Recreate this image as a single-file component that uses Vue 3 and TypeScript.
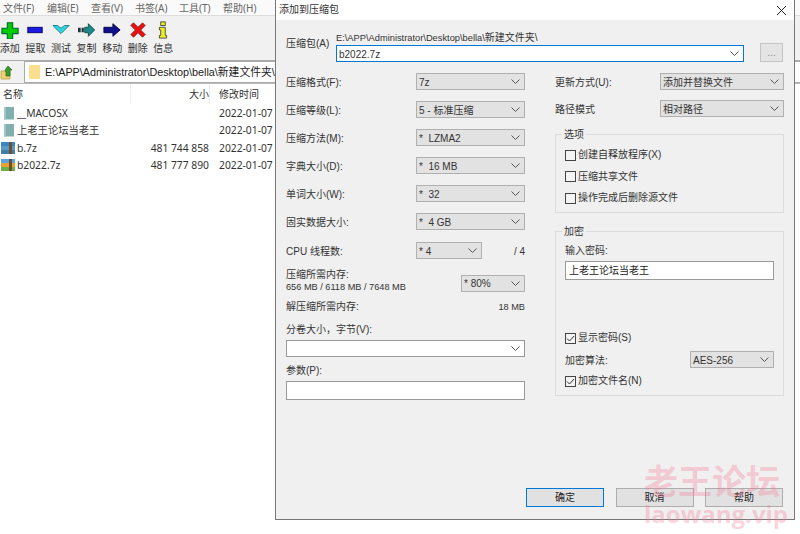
<script setup lang="ts">
type Tool = { label: string; icon: string }
type FileRow = { name: string; size: string; date: string; kind: string }
type Combo = { label: string; value: string }

const menus: string[] = ['文件(F)', '编辑(E)', '查看(V)', '书签(A)', '工具(T)', '帮助(H)']

const tools: Tool[] = [
  { label: '添加', icon: 'add' },
  { label: '提取', icon: 'extract' },
  { label: '测试', icon: 'test' },
  { label: '复制', icon: 'copy' },
  { label: '移动', icon: 'move' },
  { label: '删除', icon: 'del' },
  { label: '信息', icon: 'info' }
]

const files: FileRow[] = [
  { name: '__MACOSX', size: '', date: '2022-01-07', kind: 'folder' },
  { name: '上老王论坛当老王', size: '', date: '2022-01-07', kind: 'folder' },
  { name: 'b.7z', size: '481 744 858', date: '2022-01-07', kind: 'arc' },
  { name: 'b2022.7z', size: '481 777 890', date: '2022-01-07', kind: 'arc2' }
]

const leftCombos: Combo[] = [
  { label: '压缩格式(F):', value: '7z' },
  { label: '压缩等级(L):', value: '5 - 标准压缩' },
  { label: '压缩方法(M):', value: '*  LZMA2' },
  { label: '字典大小(D):', value: '*  16 MB' },
  { label: '单词大小(W):', value: '*  32' },
  { label: '固实数据大小:', value: '*  4 GB' }
]

const options: string[] = ['创建自释放程序(X)', '压缩共享文件', '操作完成后删除源文件']
const pathLatin = 'E:\\APP\\Administrator\\Desktop\\bella\\'
const pathCjk = '新建文件夹\\'
</script>

<template>
  <div class="screen">
    <div class="main">
      <div class="menubar">
        <span v-for="m in menus" :key="m" class="menu">{{ m }}</span>
      </div>
      <div class="toolbar">
        <div v-for="t in tools" :key="t.label" class="tool">
          <svg class="tool-icon" width="20" height="18" viewBox="0 0 22 20">
            <path v-if="t.icon === 'add'" d="M8 2h6v6h6v6h-6v6H8v-6H2V8h6z" fill="#0c0" stroke="#063" stroke-width="1.2" />
            <rect v-if="t.icon === 'extract'" x="3" y="7" width="16" height="6" fill="#1a1ae0" stroke="#00006a" />
            <path v-if="t.icon === 'test'" d="M2 5l5 0 4 3 4-3 5 0-9 9z" fill="#2fd6e0" stroke="#127c86" />
            <template v-if="t.icon === 'copy'">
              <rect x="1" y="7.5" width="3" height="5" fill="#234" />
              <rect x="5" y="7.5" width="2.5" height="5" fill="#234" />
              <path d="M8.5 7h4V3l7 7-7 7v-4h-4z" fill="#1a8a8a" stroke="#0b4a4a" />
            </template>
            <path v-if="t.icon === 'move'" d="M2 7h10V3l8 7-8 7v-4H2z" fill="#10108c" stroke="#000050" />
            <path v-if="t.icon === 'del'" d="M3 5l3-3 5 5 5-5 3 3-5 5 5 5-3 3-5-5-5 5-3-3 5-5z" fill="#e81010" stroke="#801010" stroke-width=".8" />
            <template v-if="t.icon === 'info'">
              <rect x="8.5" y="1" width="5" height="4" fill="#eef020" stroke="#333" stroke-width=".9" />
              <path d="M7 7h6.500v9H15v3H7v-3h1.500V10H7z" fill="#eef020" stroke="#333" stroke-width=".9" />
            </template>
          </svg>
          <span>{{ t.label }}</span>
        </div>
      </div>
      <div class="addressbar">
        <svg class="up-icon" width="15" height="15" viewBox="0 0 15 15">
          <path d="M1 6h9v8H1z" fill="#f0d070" stroke="#b89a40" stroke-width=".7" />
          <path d="M8 1l4 4h-2v6H6V7L5 5z" fill="#3a9a30" stroke="#1f6a20" stroke-width=".7" />
        </svg>
        <div class="address">
          <svg width="11" height="14" viewBox="0 0 11 14"><rect width="11" height="14" rx="1" fill="#fbdf8f" /></svg>
          <span class="address-text">{{ pathLatin }}{{ pathCjk }}</span>
        </div>
      </div>
      <div class="list-head">
        <span class="col-name">名称</span>
        <span class="col-size">大小</span>
        <span class="col-date">修改时间</span>
      </div>
      <div class="list">
        <div v-for="f in files" :key="f.name" class="file">
          <span class="col-name file-name">
            <svg v-if="f.kind === 'folder'" width="14" height="14" viewBox="0 0 14 14">
              <rect x="3" y="1" width="10" height="12.500" fill="#80afb0" />
              <rect x="3" y="1" width="2" height="12.500" fill="#a0c6c6" />
            </svg>
            <svg v-else width="14" height="14" viewBox="0 0 14 14">
              <rect y="1" width="14" height="4" :fill="f.kind === 'arc' ? '#3b86c4' : '#5aa5dc'" />
              <rect y="5" width="14" height="4" :fill="f.kind === 'arc' ? '#5a9ac8' : '#e8a030'" />
              <rect y="9" width="14" height="4" :fill="f.kind === 'arc' ? '#3f7fa8' : '#68b048'" />
              <rect x="8" y="1" width="3" height="12" fill="#705030" />
            </svg>
            <span>{{ f.name }}</span>
          </span>
          <span class="col-size">{{ f.size }}</span>
          <span class="col-date">{{ f.date }}</span>
        </div>
      </div>
    </div>

    <div class="dialog">
      <div class="titlebar">
        <span>添加到压缩包</span>
        <svg width="11" height="11" viewBox="0 0 11 11"><path d="M1 1l9 9M10 1l-9 9" stroke="#222" fill="none" /></svg>
      </div>
      <div class="dialog-body">
        <div class="archive">
          <span class="archive-label">压缩包(A)</span>
          <div class="archive-main">
            <span class="archive-path"><span class="path-latin">{{ pathLatin }}</span>{{ pathCjk }}</span>
            <div class="combo combo-focus">
              <span>b2022.7z</span>
              <svg class="chev" width="9" height="5" viewBox="0 0 9 5"><path d="M.5.500l4 4 4-4" /></svg>
            </div>
          </div>
          <div class="browse">...</div>
        </div>

        <div class="columns">
          <div class="left">
            <div v-for="c in leftCombos" :key="c.label" class="row">
              <span>{{ c.label }}</span>
              <div class="combo combo-left">
                <span>{{ c.value }}</span>
                <svg class="chev" width="9" height="5" viewBox="0 0 9 5"><path d="M.5.500l4 4 4-4" /></svg>
              </div>
            </div>
            <div class="row row-cpu">
              <span class="cpu-label">CPU 线程数:</span>
              <div class="combo combo-cpu">
                <span>*  4</span>
                <svg class="chev" width="9" height="5" viewBox="0 0 9 5"><path d="M.5.500l4 4 4-4" /></svg>
              </div>
              <span class="cpu-total">/ 4</span>
            </div>
            <div class="memory">
              <div class="memory-text">
                <span>压缩所需内存:</span>
                <span class="small-num">656 MB / 6118 MB / 7648 MB</span>
              </div>
              <div class="combo combo-mem">
                <span>* 80%</span>
                <svg class="chev" width="9" height="5" viewBox="0 0 9 5"><path d="M.5.500l4 4 4-4" /></svg>
              </div>
            </div>
            <div class="decomp">
              <span>解压缩所需内存:</span>
              <span class="small-num">18 MB</span>
            </div>
            <div class="field-label split-label">分卷大小，字节(V):</div>
            <div class="combo combo-white">
              <span></span>
              <svg class="chev" width="9" height="5" viewBox="0 0 9 5"><path d="M.5.500l4 4 4-4" /></svg>
            </div>
            <div class="field-label param-label">参数(P):</div>
            <div class="text-input param-input"></div>
          </div>

          <div class="right">
            <div class="row">
              <span>更新方式(U):</span>
              <div class="combo combo-right">
                <span>添加并替换文件</span>
                <svg class="chev" width="9" height="5" viewBox="0 0 9 5"><path d="M.5.500l4 4 4-4" /></svg>
              </div>
            </div>
            <div class="row row-path">
              <span>路径模式</span>
              <div class="combo combo-right">
                <span>相对路径</span>
                <svg class="chev" width="9" height="5" viewBox="0 0 9 5"><path d="M.5.500l4 4 4-4" /></svg>
              </div>
            </div>

            <div class="group group-options">
              <span class="legend">选项</span>
              <label v-for="o in options" :key="o" class="check">
                <span class="box"></span>
                <span>{{ o }}</span>
              </label>
            </div>

            <div class="group group-crypt">
              <span class="legend">加密</span>
              <div class="pw-label">输入密码:</div>
              <div class="text-input pw-input">上老王论坛当老王</div>
              <div class="crypt-bottom">
                <label class="check">
                  <span class="box">
                    <svg width="11" height="11" viewBox="0 0 11 11"><path d="M2 5.500l2.500 2.500L9 3" fill="none" stroke="#333" /></svg>
                  </span>
                  <span>显示密码(S)</span>
                </label>
                <div class="row row-algo">
                  <span>加密算法:</span>
                  <div class="combo combo-algo">
                    <span>AES-256</span>
                    <svg class="chev" width="9" height="5" viewBox="0 0 9 5"><path d="M.5.500l4 4 4-4" /></svg>
                  </div>
                </div>
                <label class="check">
                  <span class="box">
                    <svg width="11" height="11" viewBox="0 0 11 11"><path d="M2 5.500l2.500 2.500L9 3" fill="none" stroke="#333" /></svg>
                  </span>
                  <span>加密文件名(N)</span>
                </label>
              </div>
            </div>
          </div>
        </div>

        <div class="actions">
          <button class="btn btn-default">确定</button>
          <button class="btn">取消</button>
          <button class="btn">帮助</button>
        </div>
      </div>
    </div>

    <div class="watermark">
      <span class="wm-cn">老王论坛</span>
      <span class="wm-en">laowang.vip</span>
    </div>
  </div>
</template>

<style>
  html, body {
    margin: 0;
    background: #fff;
  }
</style>

<style scoped>
  .screen {
    position: relative;
    width: 800px;
    height: 534px;
    overflow: hidden;
    background: #fff;
    color: #333;
    font-family: "Noto Sans", "Noto Sans CJK SC", sans-serif;
    font-size: 10px;
    line-height: 14px;
  }

  /* main window behind the dialog */
  .main {
    width: 800px;
  }
  .menubar {
    display: flex;
    height: 15px;
    align-items: center;
    padding-left: 3px;
    color: #666;
    background: #fafafa;
    border-bottom: 1px solid #ddd;
  }
  .menu {
    width: 44px;
  }
  .toolbar {
    display: flex;
    height: 44px;
    padding-left: 0;
    background: #f1f1f1;
    border-bottom: 1px solid #aaa;
  }
  .tool {
    display: flex;
    flex-direction: column;
    align-items: center;
    width: 25.6px;
    margin-left: -3px;
    margin-right: 3px;
    padding-top: 5px;
    box-sizing: border-box;
  }
  .tool-icon {
    margin-bottom: 2px;
  }
  .addressbar {
    display: flex;
    align-items: center;
    height: 22px;
    background: #f1f1f1;
    border-bottom: 1px solid #bbb;
  }
  .up-icon {
    margin: 0 9px 0 0;
  }
  .address {
    display: flex;
    flex: 1;
    align-items: center;
    gap: 5px;
    height: 20px;
    padding-left: 4px;
    background: #fff;
    border: 1px solid #aaa;
    border-right: 0;
  }
  .address-text {
    font-family: "Liberation Sans", "Noto Sans CJK SC", sans-serif;
    font-size: 10.8px;
    color: #222;
  }
  .list-head {
    display: flex;
    height: 20px;
    align-items: center;
  }
  .col-name {
    width: 130px;
    padding-left: 3px;
    box-sizing: border-box;
  }
  .col-size {
    width: 80px;
    text-align: right;
    padding-right: 1px;
    box-sizing: border-box;
  }
  .col-date {
    margin-left: 9px;
  }
  .list-head .col-size {
    border-right: 1px solid #eee;
    border-left: 1px solid #eee;
    height: 20px;
    line-height: 20px;
    padding-right: 0;
  }
  .file {
    display: flex;
    align-items: center;
    height: 17.500px;
    font-size: 10.3px;
  }
  .file-name {
    display: flex;
    align-items: center;
    gap: 2px;
    padding-left: 1px;
  }

  /* add-to-archive dialog, a window on top of the main one */
  .dialog {
    position: absolute;
    left: 275px;
    top: 0;
    width: 518px;
    height: 519px;
    font-family: "Liberation Sans", "Noto Sans CJK SC", sans-serif;
    background: #f0f0f0;
    border: 1px solid #777;
    border-top: 0;
    display: flex;
    flex-direction: column;
  }
  .titlebar {
    display: flex;
    flex: none;
    align-items: center;
    justify-content: space-between;
    height: 20px;
    padding: 0 7px 0 3px;
    background: #fff;
  }
  .dialog-body {
    flex: 1;
    padding: 11px 10px 12px 10px;
    display: flex;
    flex-direction: column;
  }
  .archive {
    display: flex;
    align-items: flex-end;
    height: 31px;
  }
  .archive-label {
    width: 50px;
    align-self: flex-end;
    padding-bottom: 11px;
  }
  .archive-main {
    display: flex;
    flex-direction: column;
    width: 408px;
  }
  .archive-path {
    height: 14px;
  }
  .path-latin {
    font-size: 9.3px;
  }
  .browse {
    width: 23px;
    height: 19px;
    margin-left: 16px;
    box-sizing: border-box;
    text-align: center;
    line-height: 17px;
    color: #888;
    background: #e4e4e4;
    border: 1px solid #c4c4c4;
  }
  .columns {
    display: flex;
    gap: 30px;
    margin-top: 11px;
  }
  .left {
    width: 239px;
    display: flex;
    flex-direction: column;
    gap: 11px;
  }
  .right {
    width: 229px;
    display: flex;
    flex-direction: column;
  }
  .row {
    display: flex;
    align-items: center;
    justify-content: space-between;
    height: 17px;
  }
  .row > span {
    padding-top: 2px;
  }

  .combo {
    display: flex;
    align-items: center;
    justify-content: space-between;
    height: 17px;
    box-sizing: border-box;
    padding: 0 4px 0 2px;
    white-space: pre;
    background: #e2e2e2;
    border: 1px solid #b0b0b0;
  }
  .combo > span {
    padding-top: 2px;
  }
  .chev {
    fill: none;
    stroke: #555;
    stroke-width: 1;
  }
  .combo-focus {
    background: #fff;
    border-color: #0078d7;
  }
  .combo-left {
    width: 109px;
  }
  .cpu-label {
    width: 130px;
  }
  .combo-cpu {
    width: 66px;
  }
  .row-cpu {
    margin-top: 1px;
    justify-content: flex-start;
  }
  .cpu-total {
    margin-left: auto;
  }
  .memory {
    display: flex;
    align-items: center;
    justify-content: space-between;
    height: 26px;
    line-height: 12px;
  }
  .memory-text {
    display: flex;
    flex-direction: column;
    padding-bottom: 4px;
  }
  .small-num {
    font-size: 9.2px;
  }
  .combo-mem {
    width: 64px;
  }
  .decomp {
    display: flex;
    justify-content: space-between;
    margin-top: -7px;
  }
  .field-label {
    height: 14px;
  }
  .split-label {
    margin-top: -2px;
    margin-bottom: -8px;
  }
  .param-label {
    margin-top: -4px;
    margin-bottom: -8px;
  }
  .combo-white {
    background: #fff;
    border-color: #999;
  }
  .text-input {
    box-sizing: border-box;
    background: #fff;
    border: 1px solid #9a9a9a;
  }
  .param-input {
    height: 19px;
  }
  .combo-right {
    width: 124px;
  }
  .row-path {
    margin-top: 10px;
  }
  .group {
    box-sizing: border-box;
    border: 1px solid #dcdcdc;
    padding: 0 9px;
  }
  .legend {
    display: block;
    width: max-content;
    margin: -7px 0 0 -3px;
    padding: 0 2px;
    background: #f0f0f0;
    height: 14px;
  }
  .group-options {
    height: 79px;
    margin-top: 17px;
  }
  .group-options .check {
    margin-top: 7px;
    height: 14.500px;
  }
  .group-options .legend + .check {
    margin-top: 6px;
  }
  .group-crypt {
    height: 165px;
    margin-top: 18px;
    display: flex;
    flex-direction: column;
  }
  .pw-label {
    margin-top: 5px;
    height: 14px;
  }
  .pw-input {
    height: 19px;
    margin-top: 3px;
    padding-left: 3px;
    line-height: 17px;
    color: #222;
  }
  .crypt-bottom {
    margin-top: auto;
    margin-bottom: 7px;
    display: flex;
    flex-direction: column;
    gap: 6px;
  }
  .row-algo {
    height: 17px;
  }
  .combo-algo {
    width: 84px;
  }
  .check {
    display: flex;
    align-items: center;
    gap: 2px;
    height: 14px;
  }
  .box {
    display: flex;
    width: 11px;
    height: 11px;
    box-sizing: border-box;
    align-items: center;
    justify-content: center;
    background: #f4f4f4;
    border: 1px solid #444;
  }
  .box svg {
    flex: none;
  }
  .actions {
    display: flex;
    justify-content: flex-end;
    gap: 11.5px;
    margin-top: auto;
    margin-right: 1px;
  }
  .btn {
    width: 78px;
    height: 19px;
    padding: 0;
    font: inherit;
    color: #222;
    background: #e1e1e1;
    border: 1px solid #adadad;
  }
  .btn-default {
    border: 1px solid #0078d7;
  }

  .watermark {
    position: absolute;
    left: 644px;
    top: 459px;
    display: flex;
    flex-direction: column;
    color: rgba(245, 120, 150, .32);
    font-weight: 700;
    pointer-events: none;
  }
  .wm-cn {
    font-size: 34px;
    line-height: 42px;
    font-family: "Noto Sans CJK SC", sans-serif;
  }
  .wm-en {
    font-size: 24px;
    line-height: 26px;
    font-family: "Open Sans", sans-serif;
  }
</style>
